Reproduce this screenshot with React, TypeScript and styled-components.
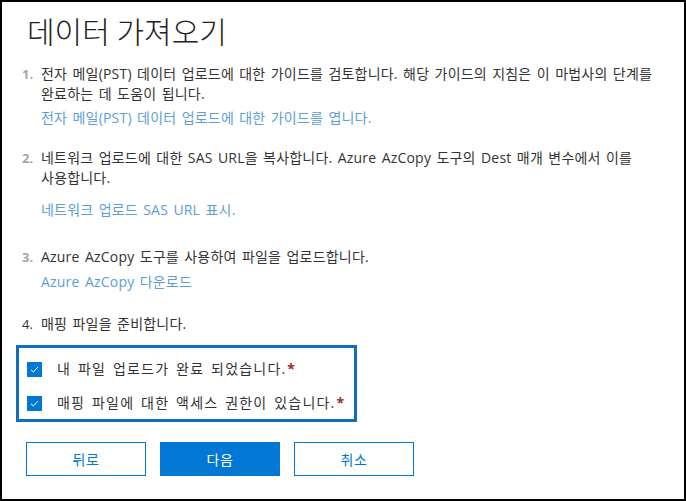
import React from 'react'
import styled, { createGlobalStyle } from 'styled-components'

const GlobalStyle = createGlobalStyle`
  html, body { margin: 0; padding: 0; background: #fff; }
  body { font-family: "Open Sans", "Noto Sans CJK KR", sans-serif; word-break: keep-all; }
`

const Frame = styled.div`
  box-sizing: border-box;
  width: 686px;
  height: 501px;
  border: 2px solid #000;
  background: #fff;
  padding: 9px 0 0 20px;
  color: #333;
`

const Title = styled.h1`
  margin: 0 0 15px 5px;
  font-family: "Noto Sans CJK KR", sans-serif;
  font-weight: 300;
  font-size: 30px;
  line-height: 38px;
  color: #222;
`

const Steps = styled.ol`
  list-style: none;
  margin: 0;
  padding: 0;
`

const Step = styled.li<{ $gap: number }>`
  display: flex;
  margin-bottom: ${p => p.$gap}px;
`

const Num = styled.span<{ $dim?: boolean }>`
  width: 19px;
  flex: none;
  font-size: 13px;
  line-height: 20px;
  font-weight: ${p => (p.$dim ? 700 : 400)};
  color: ${p => (p.$dim ? '#a6a6a6' : '#333')};
`

const Body = styled.div`
  flex: 1;
  padding-right: 12px;
`

const Text = styled.p`
  margin: 0;
  font-size: 14px;
  letter-spacing: 0.2px;
  word-spacing: 1.5px;
  line-height: 20px;
  color: #333;
`

const Link = styled.a<{ $top: number }>`
  display: block;
  margin-top: ${p => p.$top}px;
  font-size: 14px;
  letter-spacing: 0.2px;
  word-spacing: 1.5px;
  line-height: 20px;
  color: #5e9ed6;
  text-decoration: none;
  cursor: pointer;
`

const Confirm = styled.div`
  box-sizing: border-box;
  width: 341px;
  margin: 11px 0 0 -6px;
  border: 3px solid #106ebe;
  padding: 11px 0 6px 8px;
  display: flex;
  flex-direction: column;
  gap: 14px;
`

const CheckRow = styled.label`
  display: flex;
  align-items: center;
  gap: 15px;
  font-size: 14px;
  letter-spacing: 1.2px;
  word-spacing: 2px;
  line-height: 20px;
  color: #333;
`

const Box = styled.span`
  width: 15px;
  height: 15px;
  flex: none;
  background: #0078d4;
  display: flex;
  align-items: center;
  justify-content: center;
`

const Star = styled.span`
  color: #a4262c;
  font-weight: 700;
  margin-left: 1px;
`

const Buttons = styled.div`
  display: flex;
  gap: 14px;
  margin: 20px 0 0 4px;
`

const Button = styled.button<{ $primary?: boolean }>`
  box-sizing: border-box;
  width: 120px;
  height: 34px;
  border: 1px solid #0078d4;
  background: ${p => (p.$primary ? '#0078d4' : '#fff')};
  color: ${p => (p.$primary ? '#fff' : '#0078d4')};
  font-family: "Noto Sans CJK KR", sans-serif;
  font-size: 14px;
  letter-spacing: 0.5px;
  padding: 0;
  cursor: pointer;
`

const Check = () => (
  <Box>
    <svg width="11" height="11" viewBox="0 0 11 11">
      <path d="M2 5.8 L4.3 8 L9 3" fill="none" stroke="#fff" strokeWidth="1" />
    </svg>
  </Box>
)

const App: React.FC = () => (
  <>
    <GlobalStyle />
    <Frame>
      <Title>데이터 가져오기</Title>
      <Steps>
        <Step $gap={20}>
          <Num $dim>1.</Num>
          <Body>
            <Text>전자 메일(PST) 데이터 업로드에 대한 가이드를 검토합니다. 해당 가이드의 지침은 이 마법사의 단계를 완료하는 데 도움이 됩니다.</Text>
            <Link $top={4}>전자 메일(PST) 데이터 업로드에 대한 가이드를 엽니다.</Link>
          </Body>
        </Step>
        <Step $gap={27}>
          <Num $dim>2.</Num>
          <Body>
            <Text>네트워크 업로드에 대한 SAS URL을 복사합니다. Azure AzCopy 도구의 Dest 매개 변수에서 이를 사용합니다.</Text>
            <Link $top={12}>네트워크 업로드 SAS URL 표시.</Link>
          </Body>
        </Step>
        <Step $gap={22}>
          <Num $dim>3.</Num>
          <Body>
            <Text>Azure AzCopy 도구를 사용하여 파일을 업로드합니다.</Text>
            <Link $top={5}>Azure AzCopy 다운로드</Link>
          </Body>
        </Step>
        <Step $gap={0}>
          <Num>4.</Num>
          <Body>
            <Text>매핑 파일을 준비합니다.</Text>
          </Body>
        </Step>
      </Steps>
      <Confirm>
        <CheckRow>
          <Check />
          <span>내 파일 업로드가 완료 되었습니다.<Star>*</Star></span>
        </CheckRow>
        <CheckRow>
          <Check />
          <span>매핑 파일에 대한 액세스 권한이 있습니다.<Star>*</Star></span>
        </CheckRow>
      </Confirm>
      <Buttons>
        <Button>뒤로</Button>
        <Button $primary>다음</Button>
        <Button>취소</Button>
      </Buttons>
    </Frame>
  </>
)

export default App
